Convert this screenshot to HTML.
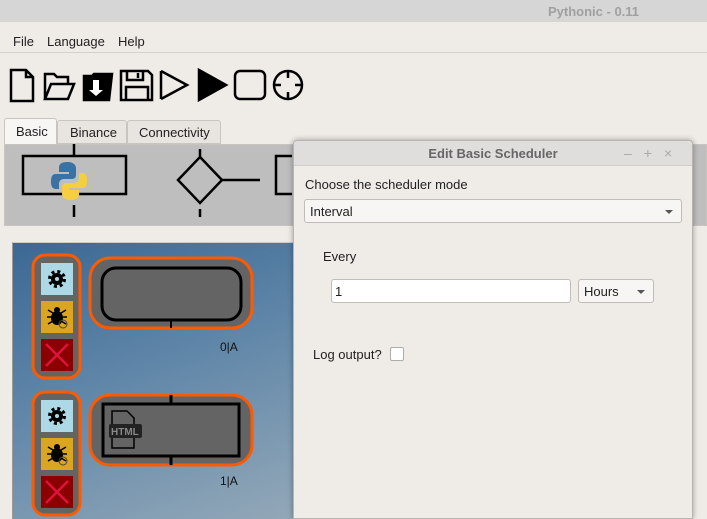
<!DOCTYPE html>
<html><head><style>
*{margin:0;padding:0;box-sizing:border-box}
body{width:707px;height:519px;overflow:hidden;background:#efebe7;font-family:"Liberation Sans",sans-serif;font-size:13px;color:#222;position:relative}
.abs{position:absolute}
</style></head><body>
<div class="abs" style="left:0;top:0;width:707px;height:22px;background:#d6d6d6"></div>
<div class="abs" style="left:548px;top:4px;font-weight:bold;color:#a0a0a0;font-size:13px">Pythonic - 0.11</div>
<div class="abs" style="left:0;top:52px;width:707px;height:1px;background:#d4d0cc"></div>
<div class="abs" style="left:13px;top:34px">File</div>
<div class="abs" style="left:47px;top:34px">Language</div>
<div class="abs" style="left:118px;top:34px">Help</div>
<!-- toolbar -->
<svg class="abs" style="left:0;top:60px" width="310" height="50" fill="none" stroke="#000" stroke-width="2.5">
<path d="M11 10h15l7 7v24H11z M26 10v7h7"/>
<path d="M45 39V14h9l3 3h11v6 M45 39l6-15h23l-6 15z"/>
<path d="M84 16h8l2 -2h18l-3 26H84z" fill="#000"/><path d="M93 20v10h-4l7 6 7-6h-4v-10z" fill="#fff" stroke="none"/>
<path d="M121 11h27l4 4v25h-31z M127 11v9h16v-9 M126 27h22v13h-22z"/><path d="M138 13v5" />
<path d="M161 11l26 14-26 14M161 11v28"/>
<path d="M199 10l27 15-27 15z" fill="#000"/>
<rect x="235" y="11" width="30" height="28" rx="5"/>
<circle cx="288" cy="25" r="14"/><path d="M288 11v7M288 32v7M274 25h7M295 25h7"/>
</svg>
<!-- tabs -->
<div class="abs" style="left:4px;top:118px;width:53px;height:28px;background:#f8f6f4;border:1px solid #c8c4c0;border-bottom:none;border-radius:3px 3px 0 0;padding:5px 0 0 11px">Basic</div>
<div class="abs" style="left:57px;top:120px;width:70px;height:24px;background:#e8e4e0;border:1px solid #c8c4c0;border-radius:3px 3px 0 0;padding:4px 0 0 12px">Binance</div>
<div class="abs" style="left:127px;top:120px;width:94px;height:24px;background:#e8e4e0;border:1px solid #c8c4c0;border-radius:3px 3px 0 0;padding:4px 0 0 11px">Connectivity</div>
<div class="abs" style="left:4px;top:144px;width:703px;height:82px;background:#bebebe;border:1px solid #c8c4c0"></div>
<svg class="abs" style="left:0;top:144px" width="300" height="82" fill="none" stroke="#000" stroke-width="2.5">
<path d="M74 0v12M74 61v12"/><rect x="23" y="12" width="103" height="38"/>
<path d="M200 5v8M200 65v8M200 13l22 23-22 23-22-23z M222 36h38"/>
<path d="M292 50H276V12h16"/>
<path d="M68 18c-8 0-9 3-9 6v4h10v2H56c-4 0-5 3-5 8s2 7 5 7h3v-5c0-3 2-5 5-5h8c3 0 4-2 4-4v-7c0-3-3-6-8-6z" fill="#3a72a4" stroke="none"/>
<path d="M70 56c8 0 9-3 9-6v-4H69v-2h13c4 0 5-3 5-8s-2-7-5-7h-3v5c0 3-2 5-5 5h-8c-3 0-4 2-4 4v7c0 3 3 6 8 6z" fill="#f5cf40" stroke="none"/>
</svg>
<!-- canvas -->
<div class="abs" style="left:12px;top:242px;width:282px;height:277px;background:linear-gradient(160deg,#3b6894 0%,#5f86a8 45%,#93a8b8 100%);border-left:1px solid #999;border-top:1px solid #ccc"></div>
<svg class="abs" style="left:0;top:240px" width="300" height="279">
<g id="tools">
<rect x="33" y="15" width="47" height="123" rx="12" fill="#646464" stroke="#ff5a00" stroke-width="3"/>
<rect x="41" y="23" width="32" height="32" fill="#add8e6"/>
<rect x="41" y="61" width="32" height="32" fill="#daa520"/>
<rect x="41" y="99" width="32" height="32" fill="#8b0000"/>
<path d="M46 104l22 22M68 104l-22 22" stroke="#dc143c" stroke-width="2.5"/>
<circle cx="57" cy="39" r="6" fill="#000"/>
<circle cx="57" cy="39" r="7.5" fill="none" stroke="#000" stroke-width="3" stroke-dasharray="3 2.9"/>
<circle cx="57" cy="39" r="2" fill="#add8e6"/>
<ellipse cx="57" cy="78" rx="6" ry="7" fill="#000"/><circle cx="57" cy="70" r="3" fill="#000"/>
<path d="M48 70l5 3M66 70l-5 3M47 77h4M67 77h-4M48 84l5-3M66 84l-5-3" stroke="#000" stroke-width="1.5"/>
<circle cx="63" cy="84" r="4" fill="none" stroke="#444" stroke-width="1"/>
</g>
<use href="#tools" y="137"/>
<rect x="90" y="18" width="162" height="70" rx="20" fill="#646464" stroke="#ff5a00" stroke-width="3"/>
<rect x="102" y="28" width="139" height="52" rx="14" fill="#646464" stroke="#000" stroke-width="3"/>
<path d="M171 80v8" stroke="#000" stroke-width="2"/>
<text x="220" y="111" font-size="12" fill="#111" font-family="Liberation Sans">0|A</text>
<rect x="90" y="155" width="162" height="70" rx="20" fill="#646464" stroke="#ff5a00" stroke-width="3"/>
<path d="M171 155v9M171 216v9" stroke="#000" stroke-width="3"/>
<rect x="103" y="164" width="136" height="52" fill="#646464" stroke="#000" stroke-width="3"/>
<path d="M112 171h15l7 7v30h-22z" fill="none" stroke="#000" stroke-width="1.5"/>
<rect x="109" y="184" width="33" height="14" rx="2" fill="#222"/>
<text x="111" y="195" font-size="10" font-weight="bold" fill="#888" font-family="Liberation Sans">HTML</text>
<text x="220" y="245" font-size="12" fill="#111" font-family="Liberation Sans">1|A</text>
</svg>
<!-- dialog -->
<div class="abs" style="left:293px;top:140px;width:400px;height:379px;background:#efebe7;border:1px solid #b8b4b0;box-shadow:0 0 6px rgba(0,0,0,.35);border-radius:4px 4px 0 0">
<div style="height:25px;background:#e0dedc;border-bottom:1px solid #d0ccc8;border-radius:4px 4px 0 0;text-align:center;font-weight:bold;color:#666;padding-top:5px;font-size:13px">Edit Basic Scheduler</div>
<div class="abs" style="left:330px;top:4px;color:#aaa;font-size:14px;letter-spacing:12px">–+×</div>
<div class="abs" style="left:11px;top:36px">Choose the scheduler mode</div>
<div class="abs" style="left:10px;top:58px;width:378px;height:24px;background:#f8f6f4;border:1px solid #c0bcb8;border-radius:3px;padding:4px 0 0 5px">Interval<span class="abs" style="right:8px;top:10px;border:4px solid transparent;border-top:4px solid #555"></span></div>
<div class="abs" style="left:29px;top:108px">Every</div>
<div class="abs" style="left:37px;top:138px;width:240px;height:24px;background:#fff;border:1px solid #c0bcb8;border-radius:3px;padding:4px 0 0 3px">1</div>
<div class="abs" style="left:284px;top:138px;width:76px;height:24px;background:#f8f6f4;border:1px solid #c0bcb8;border-radius:3px;padding:4px 0 0 5px">Hours<span class="abs" style="right:8px;top:10px;border:4px solid transparent;border-top:4px solid #555"></span></div>
<div class="abs" style="left:19px;top:206px">Log output?</div>
<div class="abs" style="left:96px;top:206px;width:14px;height:14px;background:#fff;border:1px solid #b0aca8;border-radius:2px"></div>
</div>
</body></html>
